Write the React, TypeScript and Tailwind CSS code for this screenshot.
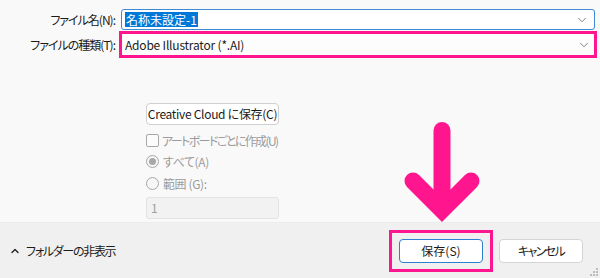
import { ChevronDown, ChevronUp } from "lucide-react";

const font = { fontFamily: "'Noto Sans CJK JP', 'Noto Sans', sans-serif", fontFeatureSettings: '"palt"' };

function Field({ label, children }: { label: string; children: React.ReactNode }) {
  return (
    <div className="flex items-center">
      <div className="w-[116px] shrink-0 whitespace-nowrap pr-[1px] text-right text-[12px] leading-none tracking-[-1px] text-[#1b1b1b]">{label}</div>
      {children}
    </div>
  );
}

function Radio({ checked, label }: { checked?: boolean; label: string }) {
  return (
    <div className="flex items-center gap-[4px] whitespace-nowrap text-[12px] leading-none tracking-[-0.4px] text-[#9b9b9b]">
      <span className="flex h-[13px] w-[13px] items-center justify-center rounded-full border border-[#a8a8a8] bg-[#f6f6f6]">
        {checked && <span className="h-[7px] w-[7px] rounded-full bg-[#a8a8a8]" />}
      </span>
      {label}
    </div>
  );
}

export default function App() {
  return (
    <div className="relative h-[278px] w-[600px] overflow-hidden bg-[#f9f9f9]" style={font}>
      <div className="flex h-[222px] flex-col pt-[9px] pr-[5px]">
        <Field label="ファイル名(N):">
          <div className="ml-[5px] flex h-[21px] flex-1 items-center rounded-[3px] border border-[#3f8ad0] bg-white pl-[3px] pr-[5px]">
            <span className="bg-[#0078d7] px-[1px] text-[12px] leading-[15px] text-white">名称未設定-1</span>
            <ChevronDown className="ml-auto h-[14px] w-[14px] text-[#6e6e6e]" strokeWidth={1.5} />
          </div>
        </Field>
        <div className="mt-[1px]">
          <Field label="ファイルの種類(T):">
            <div className="ml-[3px] mr-[-2px] flex-1 border-[3px] border-[#ff168e]">
              <div className="flex h-[21px] items-center bg-[#fdfdfd] pl-[3px] pr-[3px]">
                <span className="text-[12px] leading-none tracking-[-0.2px] text-[#1b1b1b]">Adobe Illustrator (*.AI)</span>
                <ChevronDown className="ml-auto h-[14px] w-[14px] text-[#6e6e6e]" strokeWidth={1.5} />
              </div>
            </div>
          </Field>
        </div>

        <div className="ml-[146px] mt-[45px] flex w-[133px] flex-col">
          <div className="flex h-[22px] items-center justify-center whitespace-nowrap rounded-[4px] border border-[#d0d0d0] bg-white text-[12px] leading-none tracking-[-0.3px] text-[#1b1b1b]">
            Creative Cloud に保存(C)
          </div>
          <div className="mt-[9px] flex items-center gap-[3px] whitespace-nowrap text-[12px] leading-none tracking-[-1.6px] text-[#9b9b9b]">
            <span className="h-[13px] w-[13px] shrink-0 rounded-[2px] border border-[#a8a8a8] bg-[#fbfbfb]" />
            アートボードごとに作成(U)
          </div>
          <div className="mt-[8px]">
            <Radio checked label="すべて(A)" />
          </div>
          <div className="mt-[9px]">
            <Radio label="範囲 (G):" />
          </div>
          <div className="mt-[7px] flex h-[22px] items-center rounded-[3px] border border-[#e3e3e3] bg-[#f2f2f2] pl-[4px] text-[12px] leading-none text-[#a0a0a0]">
            1
          </div>
        </div>
      </div>

      <div className="flex h-[56px] items-center border-t border-[#ececec] bg-[#f0f0f0] pr-[17px]">
        <div className="flex items-center gap-[5px] whitespace-nowrap pl-[9px] text-[12px] leading-none tracking-[-1.3px] text-[#1b1b1b]">
          <ChevronUp className="h-[12px] w-[12px]" strokeWidth={2.5} />
          フォルダーの非表示
        </div>
        <div className="ml-auto border-[3px] border-[#ff168e] px-[7px] py-[6px]">
          <div className="flex h-[24px] w-[84px] items-center justify-center rounded-[4px] border border-[#2f7fd0] bg-white text-[12px] leading-none text-[#1b1b1b]">
            保存(S)
          </div>
        </div>
        <div className="ml-[6px] flex h-[24px] w-[84px] items-center justify-center rounded-[4px] border border-[#d4d4d4] bg-white text-[12px] leading-none tracking-[-1.6px] text-[#1b1b1b]">
          キャンセル
        </div>
      </div>

      <svg className="pointer-events-none absolute bottom-[2px] right-[2px]" width="8" height="8" viewBox="0 0 8 8">
        <rect x="6" y="0" width="2" height="2" fill="#bcbcbc" />
        <rect x="3" y="3" width="2" height="2" fill="#bcbcbc" />
        <rect x="6" y="3" width="2" height="2" fill="#bcbcbc" />
        <rect x="0" y="6" width="2" height="2" fill="#bcbcbc" />
        <rect x="3" y="6" width="2" height="2" fill="#bcbcbc" />
        <rect x="6" y="6" width="2" height="2" fill="#bcbcbc" />
      </svg>

      <svg className="pointer-events-none absolute left-0 top-0" width="600" height="278" viewBox="0 0 600 278">
        <line x1="442" y1="130.5" x2="442" y2="205" stroke="#ff168e" strokeWidth="17" strokeLinecap="round" />
        <polyline
          points="413,181 442,210 471,181"
          fill="none"
          stroke="#ff168e"
          strokeWidth="17"
          strokeLinecap="round"
          strokeLinejoin="miter"
        />
      </svg>
    </div>
  );
}
